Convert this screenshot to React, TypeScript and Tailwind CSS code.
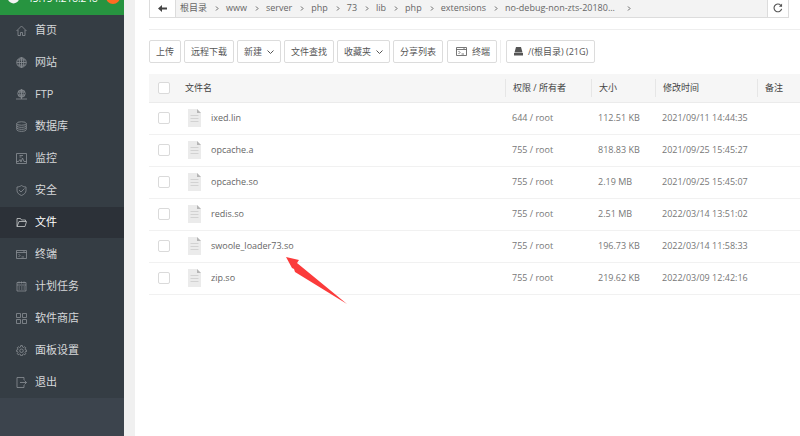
import type { ReactNode } from 'react';

const Svg = ({ children, className = 'h-[11px] w-[11px]' }: { children: ReactNode; className?: string }) => (
  <svg viewBox="0 0 22 22" fill="none" stroke="currentColor" strokeWidth="1.6" className={`shrink-0 ${className}`} aria-hidden="true">
    {children}
  </svg>
);

const terminalShape = (
  <>
    <path d="M1 3h20v16H1zM1 7h20M5 10l3 3-3 3M11 16h5" />
    <path d="M14 5h1M17 5h1" />
  </>
);

const menu: { label: string; icon: ReactNode; active?: boolean }[] = [
  { label: '首页', icon: <path d="M1 12 11 2l10 10M4 10v11h5v-6h4v6h5V10" /> },
  {
    label: '网站',
    icon: (
      <>
        <circle cx="11" cy="11" r="9.5" />
        <ellipse cx="11" cy="11" rx="4.5" ry="9.5" />
        <path d="M11 1v20M1.5 11h19M3 6h16M3 16h16" />
      </>
    ),
  },
  {
    label: 'FTP',
    icon: (
      <>
        <circle cx="11" cy="9" r="7.5" />
        <ellipse cx="11" cy="9" rx="3.5" ry="7.5" />
        <path d="M11 1v19M4 6h14M4 12h14M0 20h22" />
      </>
    ),
  },
  {
    label: '数据库',
    icon: (
      <>
        <ellipse cx="11" cy="5" rx="9.5" ry="3.5" />
        <path d="M1.5 5v12c0 5 19 5 19 0V5M1.5 9c0 5 19 5 19 0M1.5 13c0 5 19 5 19 0" />
      </>
    ),
  },
  { label: '监控', icon: <path d="M1 1h20v20H1zM1 17h4l3-4 2 5 3-8 3 7h5M7 5h7M7 8h4" /> },
  { label: '安全', icon: <path d="M11 1c3 2 6 3 9 3v7c0 5-4 8-9 10-5-2-9-5-9-10V4c3 0 6-1 9-3zM6 10l4 4 7-7" /> },
  { label: '文件', icon: <path d="M2 19V3h7l2 3h8v3M2 19 6 9h15l-3 10z" />, active: true },
  { label: '终端', icon: terminalShape },
  { label: '计划任务', icon: <path d="M2 3h18v17H2zM2 8h18M6 1v4M11 1v4M16 1v4M5 12h3M10 12h3M15 12h3M5 16h3M10 16h3M15 16h3" /> },
  { label: '软件商店', icon: <path d="M1 1h8v8H1zM13 1h8v8h-8zM1 13h8v8H1zM13 13h8v8h-8z" /> },
  {
    label: '面板设置',
    icon: (
      <>
        <path d="M9.500 1h3l.5 3 2 1 2.500-1.500 2 2L18 8l1 2 3 .5v2l-3 .5-1 2 1.500 2.500-2 2L15 18l-2 1-.5 2.500h-3L9 19l-2-1-2.500 1.500-2-2L4 15l-1-2-2.500-.5v-2L3 10l1-2-1.500-2.500 2-2L7 5l2-1z" />
        <circle cx="11" cy="11.500" r="3.500" />
      </>
    ),
  },
  { label: '退出', icon: <path d="M16 6V1H2v20h14v-5M8 11h13M17 7l4 4-4 4" /> },
];

const crumbs = ['根目录', 'www', 'server', 'php', '73', 'lib', 'php', 'extensions', 'no-debug-non-zts-20180...'];

const files = [
  { name: 'ixed.lin', owner: '644 / root', size: '112.51 KB', time: '2021/09/11 14:44:35' },
  { name: 'opcache.a', owner: '755 / root', size: '818.83 KB', time: '2021/09/25 15:45:27' },
  { name: 'opcache.so', owner: '755 / root', size: '2.19 MB', time: '2021/09/25 15:45:07' },
  { name: 'redis.so', owner: '755 / root', size: '2.51 MB', time: '2022/03/14 13:51:02' },
  { name: 'swoole_loader73.so', owner: '755 / root', size: '196.73 KB', time: '2022/03/14 11:58:33', marked: true },
  { name: 'zip.so', owner: '755 / root', size: '219.62 KB', time: '2022/03/09 12:42:16' },
];

function Sidebar() {
  return (
    <aside className="w-[124px] shrink-0 bg-[#3c444d]">
      <div className="flex h-[15px] items-end overflow-hidden bg-[#279440] pb-[11px] pl-2 text-[10px] leading-[12px] text-white">
        <svg viewBox="0 0 12 12" className="h-3 w-[11px] shrink-0" aria-hidden="true">
          <path d="M6 0 12 2v5c0 3-3 4-6 5-3-1-6-2-6-5V2z" fill="#f4f4f4" />
        </svg>
        <span className="ml-2 w-[72px]">43.154.218.248</span>
        <span className="ml-[7px] h-[14px] w-[14px] rounded-full bg-[#ff6b22] text-center">0</span>
      </div>
      <nav>
        <ul className="flex flex-col gap-px bg-[#353d44]">
          {menu.map((item) => (
            <li key={item.label}>
              <a
                href="#"
                className={`flex h-[31px] items-center gap-2 pl-4 text-[11px] ${item.active ? 'bg-[#2c3138] text-white' : 'text-[#d5d8da]'}`}
              >
                <Svg className={item.active ? 'h-[11px] w-[11px] text-[#c8cacc]' : 'h-[11px] w-[11px] text-[#8b9095]'}>{item.icon}</Svg>
                {item.label}
              </a>
            </li>
          ))}
        </ul>
      </nav>
    </aside>
  );
}

function PathBar() {
  return (
    <div className="mr-[11px] flex h-[18px] border-x border-b border-[#dcdcdc] bg-[#f3f3f3]">
      <button aria-label="后退" className="grid w-[26px] place-items-center border-r border-[#dcdcdc] bg-white pb-px text-[#444]">
        <svg viewBox="0 0 18 14" className="h-[7px] w-[9px]" aria-hidden="true">
          <path d="M0 7 8 0v5h10v4H8v5z" fill="currentColor" />
        </svg>
      </button>
      <ol className="flex flex-1 items-center pb-px pl-1 text-[9px] text-[#666]">
        {crumbs.map((crumb, i) => (
          <li key={i} className="flex items-center whitespace-nowrap">
            <a href="#" className="last:min-w-0">
              {crumb}
            </a>
            <svg
              viewBox="0 0 8 10"
              fill="none"
              stroke="currentColor"
              strokeWidth="2"
              className={`mr-[7px] h-[5px] w-1 ${i === crumbs.length - 1 ? 'ml-3' : 'ml-2'}`}
              aria-hidden="true"
            >
              <path d="m2 1 4 4-4 4" />
            </svg>
          </li>
        ))}
      </ol>
      <button aria-label="刷新" className="grid w-[21px] place-items-center border-l border-[#dcdcdc] bg-white pb-px text-[#555]">
        <Svg className="h-[10px] w-[10px]">
          <path d="M19 13a8.500 8.500 0 1 1-2-8l2 2" strokeWidth="2.500" />
          <path d="M20 1v7h-7z" fill="currentColor" stroke="none" />
        </Svg>
      </button>
    </div>
  );
}

function ToolButton({ children, chevron = false }: { children: ReactNode; chevron?: boolean }) {
  return (
    <button className="flex h-[23px] items-center gap-[5px] rounded-[2px] border border-[#dcdcdc] bg-white px-[6px] whitespace-nowrap">
      {children}
      {chevron && (
        <svg viewBox="0 0 14 8" fill="none" stroke="currentColor" strokeWidth="2" className="h-1 w-[7px]" aria-hidden="true">
          <path d="m1 1 6 6 6-6" />
        </svg>
      )}
    </button>
  );
}

function Toolbar() {
  return (
    <div className="flex items-center gap-[3px] text-[9px] text-[#555]">
      <ToolButton>上传</ToolButton>
      <ToolButton>远程下载</ToolButton>
      <ToolButton chevron>新建</ToolButton>
      <ToolButton>文件查找</ToolButton>
      <ToolButton chevron>收藏夹</ToolButton>
      <ToolButton>分享列表</ToolButton>
      <div className="ml-px border-r border-[#eee] pr-[3px]">
        <ToolButton>
          <Svg className="ml-[2px] h-[11px] w-[11px]">{terminalShape}</Svg>
          终端
        </ToolButton>
      </div>
      <div className="ml-[2px]">
        <ToolButton>
          <svg viewBox="0 0 18 18" className="ml-px h-[9px] w-[9px]" fill="currentColor" aria-hidden="true">
            <path d="M4 0h10l3 11H1zM0 12h18v5H0z" />
          </svg>
          /(根目录) (21G)
        </ToolButton>
      </div>
    </div>
  );
}

const Check = ({ label }: { label: string }) => (
  <input type="checkbox" aria-label={label} className="block h-3 w-3 appearance-none rounded-[2px] border border-[#dadada] bg-white" />
);

const FileIcon = () => (
  <svg viewBox="0 0 26 36" className="h-[18px] w-[13px] shrink-0" aria-hidden="true">
    <path d="M0 0h18l8 8v28H0z" fill="#ebebeb" />
    <path d="M18 0v8h8z" fill="#b5b5b5" />
    <path d="M5 13h16M5 19h16M5 25h16" stroke="#d2d2d2" strokeWidth="2" />
  </svg>
);

const Arrow = () => (
  <svg viewBox="0 0 62 48" className="pointer-events-none absolute top-full left-[75px] mt-1 h-12 w-[62px]" aria-hidden="true">
    <path d="M0 0 13 3 11 6 61 47 9 15 8 12 6 11z" fill="#fb3b3b" />
  </svg>
);

const HeadCell = ({ children }: { children: ReactNode }) => (
  <th className="p-0 text-left font-normal">
    <div className="flex h-[18px] items-center border-l border-[#e6e6e6] pl-[7px]">{children}</div>
  </th>
);

function FileTable() {
  return (
    <table className="w-full table-fixed border-collapse text-[9px] text-[#777]">
      <colgroup>
        <col className="w-9" />
        <col />
        <col className="w-[86px]" />
        <col className="w-16" />
        <col className="w-[102px]" />
        <col className="w-[43px]" />
      </colgroup>
      <thead>
        <tr className="h-7 border-b border-[#ebebeb] bg-[#f6f6f6] text-[#444]">
          <th className="p-0 pl-[9px]">
            <Check label="全选" />
          </th>
          <th className="p-0 text-left font-normal">文件名</th>
          <HeadCell>权限 / 所有者</HeadCell>
          <HeadCell>大小</HeadCell>
          <HeadCell>修改时间</HeadCell>
          <HeadCell>备注</HeadCell>
        </tr>
      </thead>
      <tbody>
        {files.map((file) => (
          <tr key={file.name} className="h-8 border-b border-[#f1f1f1]">
            <td className="p-0 pl-[9px]">
              <Check label={file.name} />
            </td>
            <td className="p-0">
              <div className="flex items-center gap-[10px] pl-[3px]">
                <FileIcon />
                <span className="relative text-[#666]">
                  {file.name}
                  {file.marked && <Arrow />}
                </span>
              </div>
            </td>
            <td className="p-0 pl-[7px]">{file.owner}</td>
            <td className="p-0 pl-[7px]">{file.size}</td>
            <td className="p-0 pl-[7px]">{file.time}</td>
            <td className="p-0" />
          </tr>
        ))}
      </tbody>
    </table>
  );
}

export default function App() {
  return (
    <div className="flex min-h-screen bg-[#f0f0f0] font-['Open_Sans','Noto_Sans_CJK_SC',sans-serif]">
      <Sidebar />
      <main className="ml-[11px] min-w-0 flex-1 bg-white pl-[14px]">
        <PathBar />
        <div className="mt-[11px] border-t border-[#eee] pt-[10px] pb-[11px]">
          <Toolbar />
        </div>
        <FileTable />
      </main>
    </div>
  );
}
